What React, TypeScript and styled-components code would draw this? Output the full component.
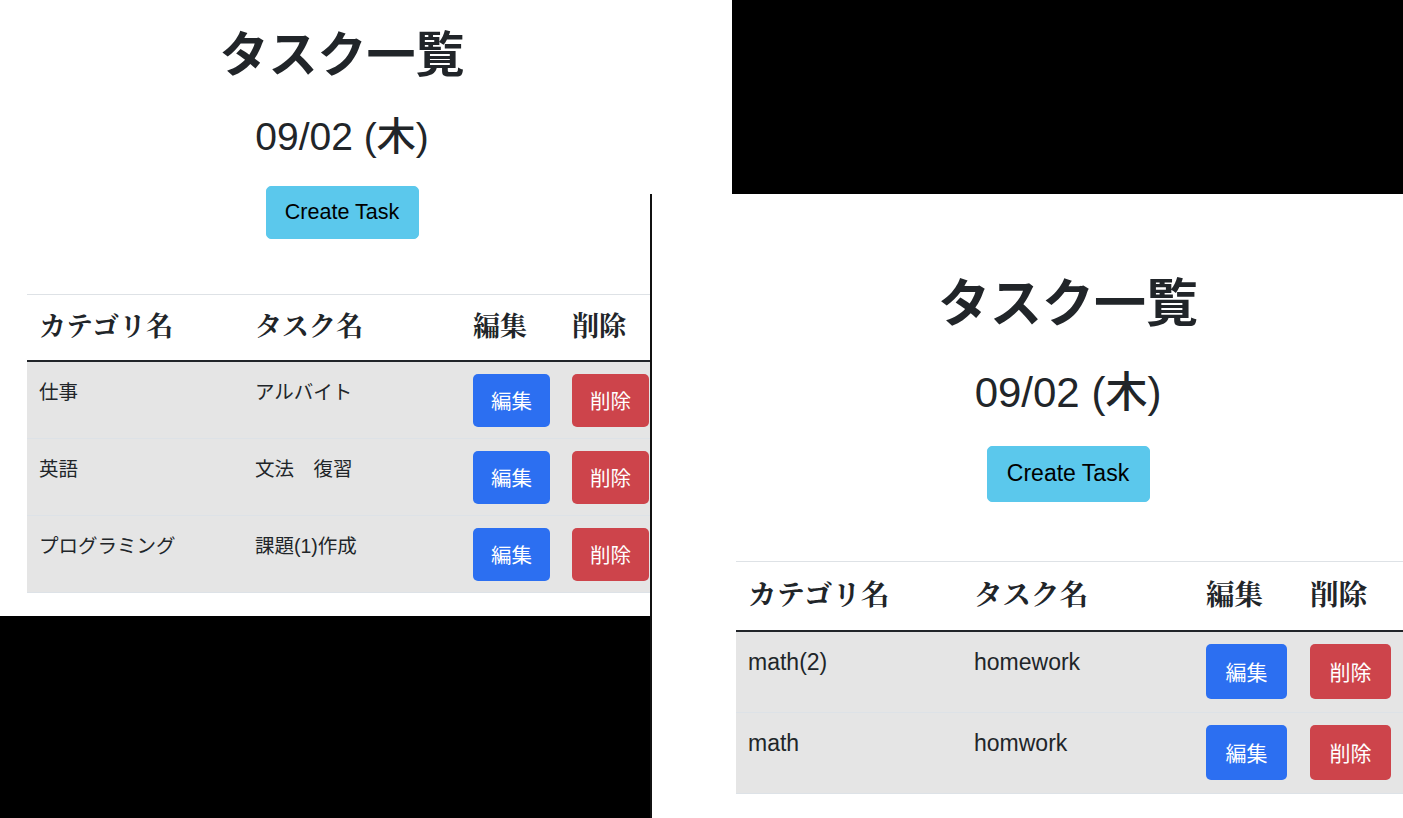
import React from 'react';
import styled, { createGlobalStyle, ThemeProvider } from 'styled-components';

type Metrics = {
  padTop: number;
  contentWidth: number;
  sidePad: number;
  tableW: number;
  titleSize: number;
  dateSize: number;
  titleGap: number;
  dateGap: number;
  btnW: number;
  btnH: number;
  btnFont: number;
  tableGap: number;
  headH: number;
  headFont: number;
  cellFont: number;
  rowH: number;
  actionW: number;
  actionH: number;
  actionFont: number;
  cols: number[];
};

type Task = { category: string; name: string };

// the two captures are at slightly different zoom levels
const leftShot: Metrics = {
  padTop: 22,
  contentWidth: 684,
  sidePad: 27,
  tableW: 630,
  titleSize: 49,
  dateSize: 39,
  titleGap: 33,
  dateGap: 25,
  btnW: 153,
  btnH: 53,
  btnFont: 21.5,
  tableGap: 55,
  headH: 65,
  headFont: 27,
  cellFont: 19.5,
  rowH: 77,
  actionW: 77,
  actionH: 53,
  actionFont: 20.5,
  cols: [216, 218, 99, 97],
};

const rightShot: Metrics = {
  padTop: 75,
  contentWidth: 832,
  sidePad: 84,
  tableW: 667,
  titleSize: 52,
  dateSize: 42,
  titleGap: 37,
  dateGap: 27,
  btnW: 163,
  btnH: 56,
  btnFont: 23,
  tableGap: 59,
  headH: 68,
  headFont: 28.5,
  cellFont: 23,
  rowH: 81,
  actionW: 81,
  actionH: 55,
  actionFont: 21,
  cols: [226, 232, 104, 105],
};

const leftTasks: Task[] = [
  { category: '仕事', name: 'アルバイト' },
  { category: '英語', name: '文法　復習' },
  { category: 'プログラミング', name: '課題(1)作成' },
];

const rightTasks: Task[] = [
  { category: 'math(2)', name: 'homework' },
  { category: 'math', name: 'homwork' },
];

const GlobalStyle = createGlobalStyle`
  html, body {
    margin: 0;
    padding: 0;
    background: #000;
  }
  body {
    font-family: 'Liberation Sans', 'Noto Sans CJK JP', sans-serif;
    color: #212529;
  }
  * {
    box-sizing: border-box;
  }
`;

const TaskList = ({ tasks }: { tasks: Task[] }) => (
  <Page>
    <Title>タスク一覧</Title>
    <DateLabel>09/02 (木)</DateLabel>
    <CreateButton>Create Task</CreateButton>
    <TableRow>
      <Table>
        <thead>
          <tr>
            <HeadCell $col={0}>カテゴリ名</HeadCell>
            <HeadCell $col={1}>タスク名</HeadCell>
            <HeadCell $col={2}>編集</HeadCell>
            <HeadCell $col={3}>削除</HeadCell>
          </tr>
        </thead>
        <tbody>
          {tasks.map((t) => (
            <tr key={t.category + t.name}>
              <TextCell>{t.category}</TextCell>
              <TextCell>{t.name}</TextCell>
              <ActionCell>
                <ActionButton $kind="edit">編集</ActionButton>
              </ActionCell>
              <ActionCell>
                <ActionButton $kind="delete">削除</ActionButton>
              </ActionCell>
            </tr>
          ))}
        </tbody>
      </Table>
    </TableRow>
  </Page>
);

const App = () => (
  <>
    <GlobalStyle />
    <Desktop>
      <Shot $x={0} $y={0} $w={732} $h={616}>
        <ThemeProvider theme={leftShot}>
          <TaskList tasks={leftTasks} />
        </ThemeProvider>
      </Shot>
      <Shot $x={650} $y={194} $w={753} $h={624} $edge>
        <ThemeProvider theme={rightShot}>
          <TaskList tasks={rightTasks} />
        </ThemeProvider>
      </Shot>
    </Desktop>
  </>
);

export default App;

const Desktop = styled.div`
  position: relative;
  width: 1403px;
  height: 818px;
  background: #000;
  overflow: hidden;
`;

const Shot = styled.div<{ $x: number; $y: number; $w: number; $h: number; $edge?: boolean }>`
  position: absolute;
  left: ${(p) => p.$x}px;
  top: ${(p) => p.$y}px;
  width: ${(p) => p.$w}px;
  height: ${(p) => p.$h}px;
  background: #fff;
  overflow: hidden;
  border-left: ${(p) => (p.$edge ? '2px solid #111' : 'none')};
`;

const Page = styled.div`
  width: ${(p) => p.theme.contentWidth}px;
  padding: ${(p) => p.theme.padTop}px ${(p) => p.theme.sidePad}px 0;
  display: flex;
  flex-direction: column;
  align-items: center;
`;

const Title = styled.h1`
  margin: 0;
  font-family: 'Noto Sans CJK JP', sans-serif;
  font-size: ${(p) => p.theme.titleSize}px;
  font-weight: 600;
  line-height: 1.2;
  color: #212529;
`;

const DateLabel = styled.h2`
  margin: ${(p) => p.theme.titleGap}px 0 0;
  font-family: 'Liberation Sans', 'Noto Sans CJK JP', sans-serif;
  font-size: ${(p) => p.theme.dateSize}px;
  font-weight: 500;
  line-height: 1.2;
  color: #212529;
`;

const CreateButton = styled.button`
  margin-top: ${(p) => p.theme.dateGap}px;
  width: ${(p) => p.theme.btnW}px;
  height: ${(p) => p.theme.btnH}px;
  border: 1px solid #5bc8ec;
  border-radius: 5px;
  background: #5bc8ec;
  color: #000;
  font-family: 'Liberation Sans', sans-serif;
  font-size: ${(p) => p.theme.btnFont}px;
  padding: 0;
`;

const TableRow = styled.div`
  align-self: stretch;
  margin-top: ${(p) => p.theme.tableGap}px;
`;

const Table = styled.table`
  width: ${(p) => p.theme.tableW}px;
  border-collapse: separate;
  border-spacing: 0;
  table-layout: fixed;
  text-align: left;
`;

const HeadCell = styled.th<{ $col: number }>`
  width: ${(p) => p.theme.cols[p.$col]}px;
  padding: 0 0 6px 12px;
  border-top: 1px solid #dee2e6;
  border-bottom: 2px solid #212529;
  font-family: 'Noto Serif CJK JP', 'Noto Sans CJK JP', serif;
  font-size: ${(p) => p.theme.headFont}px;
  font-weight: 700;
  line-height: ${(p) => p.theme.headH - 6}px;
  color: #212529;
  white-space: nowrap;
  vertical-align: top;
`;

const TextCell = styled.td`
  padding: 13px 0 0 12px;
  background: #e5e5e5;
  border-bottom: 1px solid #dde2e7;
  font-size: ${(p) => p.theme.cellFont}px;
  line-height: 34px;
  color: #212529;
  vertical-align: top;
  white-space: nowrap;
`;

const ActionCell = styled.td`
  padding: 12px 0 ${(p) => p.theme.rowH - p.theme.actionH - 13}px 12px;
  background: #e5e5e5;
  border-bottom: 1px solid #dde2e7;
  vertical-align: top;
`;

const ActionButton = styled.button<{ $kind: 'edit' | 'delete' }>`
  display: block;
  width: ${(p) => p.theme.actionW}px;
  height: ${(p) => p.theme.actionH}px;
  padding: 0;
  border: none;
  border-radius: 5px;
  background: ${(p) => (p.$kind === 'edit' ? '#2c6ff1' : '#cd444b')};
  color: #fff;
  font-family: 'Noto Sans CJK JP', sans-serif;
  font-size: ${(p) => p.theme.actionFont}px;
  line-height: 1;
`;
